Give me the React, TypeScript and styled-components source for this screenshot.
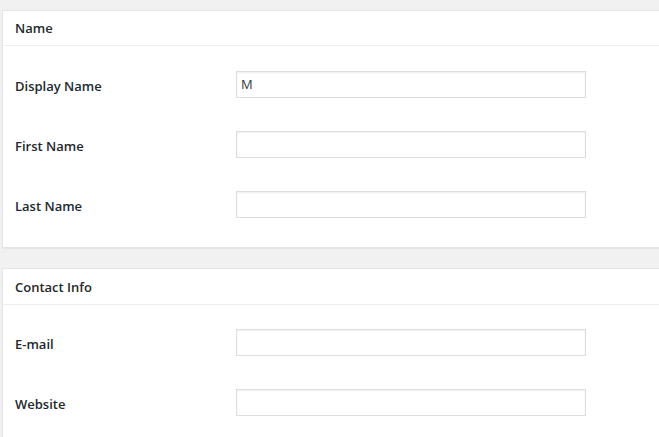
import React from "react";
import styled, { createGlobalStyle } from "styled-components";

const GlobalStyle = createGlobalStyle`
  html, body {
    margin: 0;
    padding: 0;
    background: #f1f1f1;
  }
  body {
    font-family: "Open Sans", "Noto Sans", "Liberation Sans", sans-serif;
    color: #23282d;
    overflow: hidden;
  }
  * { box-sizing: border-box; }
`;

const Page = styled.div`
  display: flex;
  flex-direction: column;
  gap: 20px;
  padding: 10px 0 0 2px;
  width: 659px;
  height: 437px;
`;

const Card = styled.section`
  background: #fff;
  border: 1px solid #e5e5e5;
  border-right: none;
  box-shadow: 0 1px 1px rgba(0, 0, 0, 0.04);
`;

const CardHeader = styled.h2<{ $h: number }>`
  margin: 0;
  height: ${(p) => p.$h}px;
  display: flex;
  align-items: center;
  padding: 0 12px;
  font-size: 13px;
  font-weight: 600;
  border-bottom: 1px solid #eeeeee;
  color: #23282d;
`;

const CardBody = styled.div<{ $pt: number; $pb: number }>`
  padding: ${(p) => p.$pt}px 0 ${(p) => p.$pb}px 12px;
  display: flex;
  flex-direction: column;
`;

const FieldRow = styled.div`
  display: grid;
  grid-template-columns: 221px 350px;
  align-items: center;
  height: 60px;
`;

const Label = styled.label`
  font-size: 13px;
  font-weight: 600;
  color: #23282d;
  padding-top: 3px;
`;

const Input = styled.input`
  width: 350px;
  height: 27px;
  border: 1px solid #dddddd;
  box-shadow: inset 0 1px 2px rgba(0, 0, 0, 0.07);
  background: #fff;
  padding: 0 4px;
  font-family: "Open Sans", "Noto Sans", sans-serif;
  font-size: 13px;
  color: #32373c;
  outline: none;
`;

const nameFields = [
  { label: "Display Name", value: "M" },
  { label: "First Name", value: "" },
  { label: "Last Name", value: "" },
];

const contactFields = [
  { label: "E-mail", value: "" },
  { label: "Website", value: "" },
];

export default function App() {
  return (
    <>
      <GlobalStyle />
      <Page>
        <Card>
          <CardHeader $h={35}>Name</CardHeader>
          <CardBody $pt={8} $pb={13}>
            {nameFields.map((f) => (
              <FieldRow key={f.label}>
                <Label>{f.label}</Label>
                <Input defaultValue={f.value} />
              </FieldRow>
            ))}
          </CardBody>
        </Card>
        <Card>
          <CardHeader $h={36}>Contact Info</CardHeader>
          <CardBody $pt={7} $pb={12}>
            {contactFields.map((f) => (
              <FieldRow key={f.label}>
                <Label>{f.label}</Label>
                <Input defaultValue={f.value} />
              </FieldRow>
            ))}
          </CardBody>
        </Card>
      </Page>
    </>
  );
}
